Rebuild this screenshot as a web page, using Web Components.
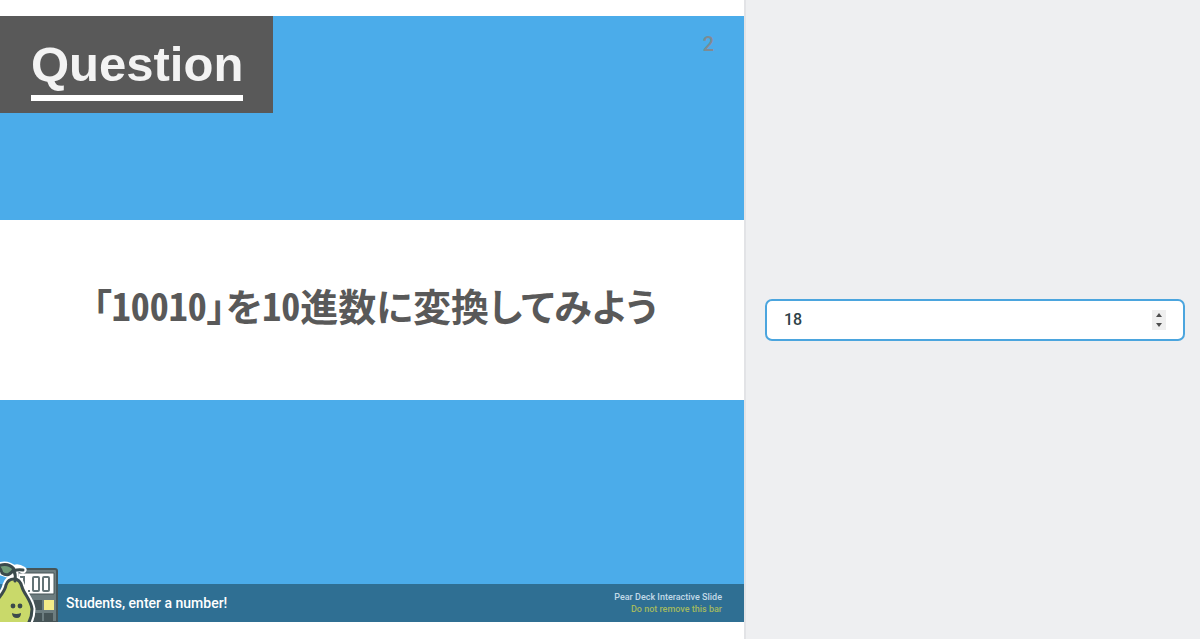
<!DOCTYPE html>
<html lang="ja">
<head>
<meta charset="utf-8">
<meta name="viewport" content="width=device-width, initial-scale=1">
<title>Pear Deck</title>
<style>
  body {
    margin: 0;
    background-color: #fff;
  }
</style>
</head>
<body>
<deck-session>
  <deck-slide slot="slide">
    <span slot="title">Question</span>
    <span slot="page">2</span>
    <span slot="body">「10010」を10進数に変換してみよう</span>
    <prompt-bar slot="bar">
      <span slot="prompt">Students, enter a number!</span>
      <span slot="product">Pear Deck Interactive Slide</span>
      <span slot="notice">Do not remove this bar</span>
    </prompt-bar>
  </deck-slide>
  <number-answer slot="answer" value="18"></number-answer>
</deck-session>

<script>
class DeckSession extends HTMLElement {
  constructor() {
    super();
    this.shadowDOM = this.attachShadow({ mode: "open" });
  }

  connectedCallback() {
    this.render();
  }

  render() {
    this.shadowDOM.innerHTML = `
      <style>
        :host {
          display: grid;
          grid-template-columns: 62fr 38fr;
          min-height: 100vh;
        }

        main {
          display: flex;
          align-items: center;
          padding-bottom: 1px;
        }

        aside {
          display: flex;
          align-items: center;
          box-sizing: border-box;
          padding: 0 15px 0 19px;
          border-left: 2px solid #e2e3e6;
          background-color: #eeeff1;
        }
      </style>
      <main><slot name="slide"></slot></main>
      <aside><slot name="answer"></slot></aside>
    `;
  }
}

class DeckSlide extends HTMLElement {
  constructor() {
    super();
    this.shadowDOM = this.attachShadow({ mode: "open" });
  }

  connectedCallback() {
    this.render();
  }

  render() {
    this.shadowDOM.innerHTML = `
      <style>
        * {
          margin: 0;
          padding: 0;
          box-sizing: border-box;
        }

        :host {
          display: grid;
          grid-template-rows: 204fr 180fr 184fr auto;
          width: 100%;
          aspect-ratio: 744 / 606;
          background-color: #4bacea;
          font-family: "Liberation Sans", Arial, sans-serif;
        }

        header {
          display: flex;
          justify-content: space-between;
          align-items: flex-start;
          padding-right: 30px;
        }

        .title {
          padding: 20px 30px 12px 31px;
          background-color: #595959;
        }

        h1 {
          padding: 0 0 3px;
          border-bottom: 6px solid #fff;
          color: #f3f3f3;
          font-size: 49px;
          line-height: 56px;
        }

        .page {
          padding-top: 16px;
          color: #7f8b92;
          font-size: 20px;
          line-height: 24px;
          font-family: Roboto, sans-serif;
          font-weight: 500;
        }

        .body {
          display: flex;
          align-items: center;
          justify-content: center;
          padding: 0 0 10px 6px;
          background-color: #fff;
          color: #595959;
          font-family: "Noto Sans CJK JP", sans-serif;
          font-feature-settings: "palt", "hwid";
          font-size: 38px;
          font-weight: 700;
          line-height: 48px;
        }

        slot[name="bar"] {
          grid-row: 4;
        }
      </style>
      <header>
        <div class="title"><h1><slot name="title"></slot></h1></div>
        <p class="page"><slot name="page"></slot></p>
      </header>
      <p class="body"><slot name="body"></slot></p>
      <div></div>
      <slot name="bar"></slot>
    `;
  }
}

class PromptBar extends HTMLElement {
  constructor() {
    super();
    this.shadowDOM = this.attachShadow({ mode: "open" });
  }

  connectedCallback() {
    this.render();
  }

  render() {
    this.shadowDOM.innerHTML = `
      <style>
        * {
          margin: 0;
          box-sizing: border-box;
        }

        :host {
          display: flex;
          align-items: center;
          justify-content: space-between;
          position: relative;
          box-sizing: border-box;
          height: 38px;
          padding: 0 22px 0 66px;
          background-color: #2f6f93;
          color: #fff;
          font-family: Roboto, sans-serif;
        }

        pear-badge {
          position: absolute;
          left: 0;
          bottom: 0;
        }

        .prompt {
          font-size: 14px;
          font-weight: 500;
          line-height: 20px;
        }

        .credit {
          color: #c3dae8;
          font-size: 9px;
          font-weight: 500;
          line-height: 12px;
          text-align: right;
        }

        .notice {
          color: #a3b95f;
        }
      </style>
      <pear-badge></pear-badge>
      <p class="prompt"><slot name="prompt"></slot></p>
      <div class="credit">
        <p><slot name="product"></slot></p>
        <p class="notice"><slot name="notice"></slot></p>
      </div>
    `;
  }
}

class PearBadge extends HTMLElement {
  constructor() {
    super();
    this.shadowDOM = this.attachShadow({ mode: "open" });
  }

  connectedCallback() {
    this.render();
  }

  render() {
    this.shadowDOM.innerHTML = `
      <style>
        :host {
          display: block;
        }

        svg {
          display: block;
        }
      </style>
      <svg width="60" height="62" viewBox="0 0 60 62" aria-hidden="true">
        <path d="M18 9H55Q57 9 57 11V62H18Z" fill="#6d7d80" stroke="#465457" stroke-width="2"/>
        <path d="M18 13H54V34H18Z" fill="#fff" stroke="#465457"/>
        <g fill="none" stroke="#637376" stroke-width="2">
          <rect x="33" y="17" width="6" height="14" rx="1"/>
          <rect x="43" y="17" width="6" height="14" rx="1"/>
          <path d="M20 17H24V30"/>
          <path d="M29 30V32"/>
        </g>
        <g fill="#465457">
          <rect x="34" y="40" width="8" height="10"/>
          <rect x="34" y="53" width="8" height="9"/>
          <rect x="44" y="53" width="9" height="9"/>
        </g>
        <rect x="44" y="40" width="10" height="10" fill="#f3ea88"/>
        <path d="M-6 44C0 36 5 32 6 25Q8 19 14 19Q20 19 22 27C24 34 31 40 32 49Q32 57 28 64H-6Z" fill="#fff" stroke="#fff" stroke-width="7"/>
        <path d="M-1 6Q7 3 14 9Q17 6 23 10M15 18V11M1 12L10 15" fill="none" stroke="#fff" stroke-width="7" stroke-linecap="round"/>
        <path d="M-6 44C0 36 5 32 6 25Q8 19 14 19Q20 19 22 27C24 34 31 40 32 49Q32 57 28 64H-6Z" fill="#c9d96a" stroke="#3b4a4c" stroke-width="3"/>
        <path d="M15 21Q16 15 14 11Q18 9 23 10" fill="none" stroke="#3b4a4c" stroke-width="3" stroke-linecap="round"/>
        <path d="M-2 6Q8 2 14 9Q9 18 2 13Q1 9 -2 6Z" fill="#6f9a78" stroke="#3b4a4c" stroke-width="3" stroke-linejoin="round"/>
        <circle cx="13" cy="46" r="2.4" fill="#3b4a4c"/>
        <circle cx="20" cy="46" r="2.4" fill="#3b4a4c"/>
        <path d="M12 53Q16 55 21 53Q21 58 17 58Q12 58 12 53Z" fill="#3b4a4c"/>
      </svg>
    `;
  }
}

class NumberAnswer extends HTMLElement {
  constructor() {
    super();
    this.shadowDOM = this.attachShadow({ mode: "open" });
  }

  connectedCallback() {
    this.render();
  }

  step(amount) {
    this.shadowDOM.querySelector("#answer").stepUp(amount);
  }

  render() {
    this.shadowDOM.innerHTML = `
      <style>
        * {
          margin: 0;
          padding: 0;
          box-sizing: border-box;
        }

        :host {
          display: block;
          width: 100%;
        }

        .field {
          display: flex;
          align-items: center;
          height: 42px;
          padding: 0 17px;
          border: 2px solid #4ba5de;
          border-radius: 7px;
          background-color: #fff;
        }

        input {
          flex: 1;
          min-width: 0;
          border: none;
          outline: none;
          background: none;
          color: #2e4247;
          font-family: Roboto, sans-serif;
          font-size: 16px;
          font-weight: 500;
          line-height: 24px;
          appearance: textfield;
        }

        input::-webkit-inner-spin-button {
          appearance: none;
        }

        .spinner {
          display: grid;
          width: 14px;
          background-color: #efefef;
        }

        button {
          display: flex;
          align-items: center;
          justify-content: center;
          height: 10px;
          border: none;
          background: none;
          cursor: pointer;
        }
      </style>
      <div class="field">
        <input id="answer" type="number" aria-label="Number" value="${this.getAttribute("value")}">
        <div class="spinner">
          <button id="up" type="button" aria-label="Increase">
            <svg width="8" height="4" viewBox="0 0 8 4"><path d="M1 4L4 0L7 4Z" fill="#4d4d4d"/></svg>
          </button>
          <button id="down" type="button" aria-label="Decrease">
            <svg width="8" height="4" viewBox="0 0 8 4"><path d="M1 0L4 4L7 0Z" fill="#4d4d4d"/></svg>
          </button>
        </div>
      </div>
    `;

    this.shadowDOM.querySelector("#up").addEventListener("click", () => this.step(1));
    this.shadowDOM.querySelector("#down").addEventListener("click", () => this.step(-1));
  }
}

customElements.define("deck-session", DeckSession);
customElements.define("deck-slide", DeckSlide);
customElements.define("prompt-bar", PromptBar);
customElements.define("pear-badge", PearBadge);
customElements.define("number-answer", NumberAnswer);
</script>
</body>
</html>
